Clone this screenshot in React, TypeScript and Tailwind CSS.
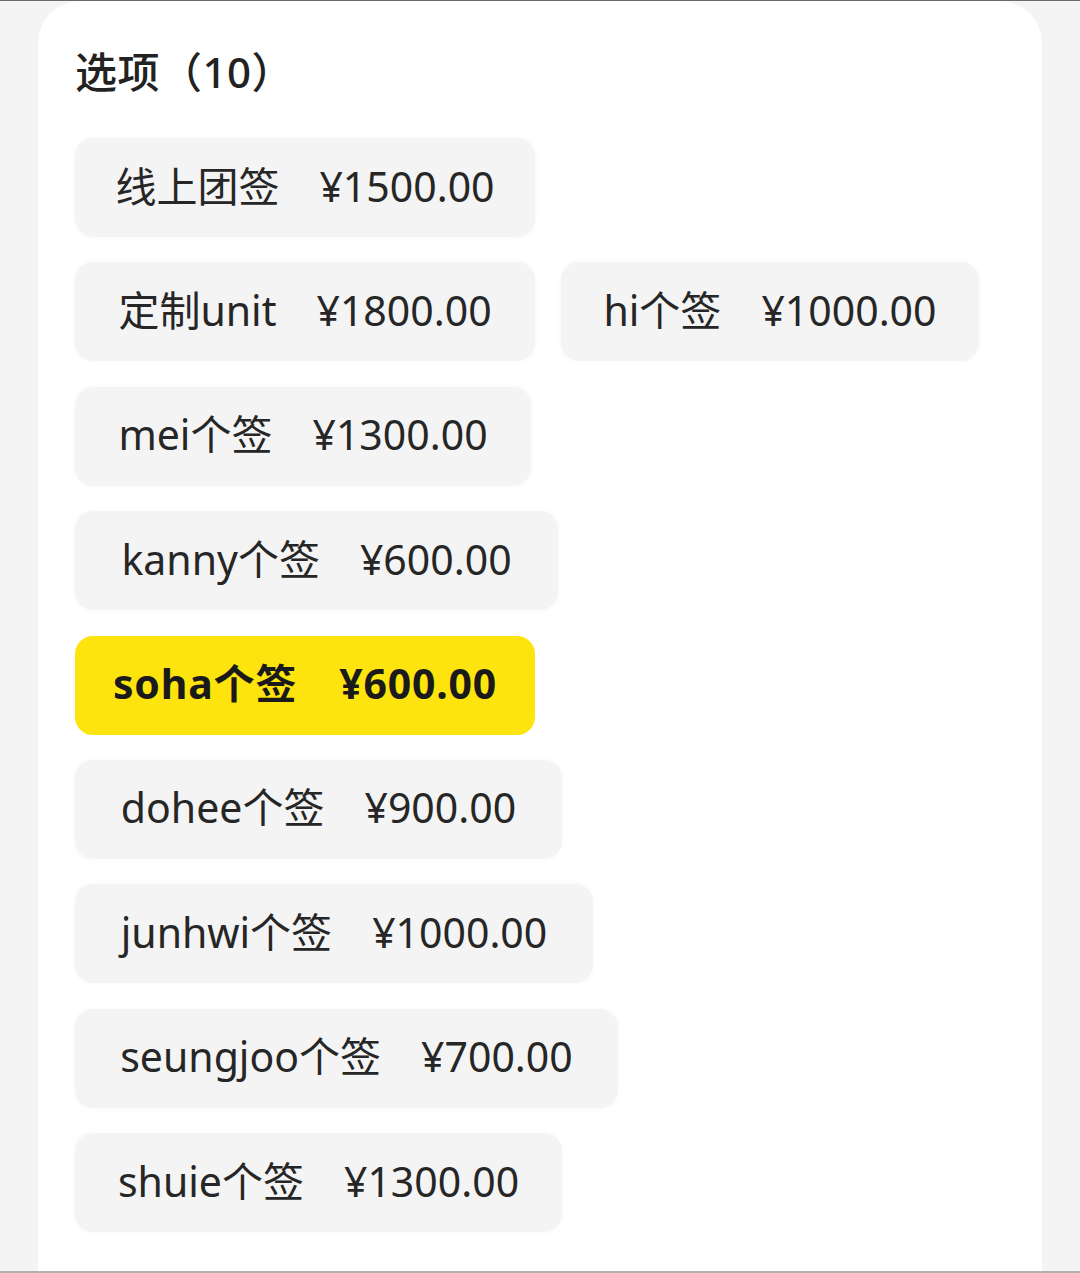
import React from "react";

type Opt = { name: string; price: string; w: string; selected?: boolean };

const rows: Opt[][] = [
  [{ name: "线上团签", price: "¥1500.00", w: "w-[460px]" }],
  [
    { name: "定制unit", price: "¥1800.00", w: "w-[460px]" },
    { name: "hi个签", price: "¥1000.00", w: "w-[418px]" },
  ],
  [{ name: "mei个签", price: "¥1300.00", w: "w-[456px]" }],
  [{ name: "kanny个签", price: "¥600.00", w: "w-[483px]" }],
  [{ name: "soha个签", price: "¥600.00", w: "w-[460px]", selected: true }],
  [{ name: "dohee个签", price: "¥900.00", w: "w-[487px]" }],
  [{ name: "junhwi个签", price: "¥1000.00", w: "w-[518px]" }],
  [{ name: "seungjoo个签", price: "¥700.00", w: "w-[543px]" }],
  [{ name: "shuie个签", price: "¥1300.00", w: "w-[487px]" }],
];

function Chip({ opt }: { opt: Opt }) {
  return (
    <div
      className={`${opt.w} h-[99px] rounded-[18px] flex items-center justify-center pb-[3px] text-[41px] leading-none ${
        opt.selected
          ? "bg-[#fde40f] font-bold text-[#1a1a1a] gap-[42px] tracking-[0.8px]"
          : "bg-[#f4f4f4] font-normal text-[#262626] gap-[40px] shadow-[0_0_6px_rgba(0,0,0,0.03)]"
      }`}
    >
      <span>{opt.name}</span>
      <span>{opt.price}</span>
    </div>
  );
}

export default function App() {
  return (
    <div
      className="w-[1080px] h-[1273px] bg-[#f4f4f4] border-t border-b-2 border-t-[#6b6b6b] border-b-[#b0b0b0] overflow-hidden flex flex-col"
      style={{ fontFamily: '"Noto Sans", "Noto Sans CJK SC", sans-serif' }}
    >
      <div className="mx-[38px] flex-1 bg-white rounded-t-[42px] pl-[37px]">
        <h2 className="mt-[40px] h-[60px] flex items-center text-[42px] font-medium text-[#222] tracking-[0.5px]">
          选项（10）
        </h2>
        <div className="mt-[37px] flex flex-col gap-[25.4px]">
          {rows.map((row, i) => (
            <div key={i} className="flex gap-[26px]">
              {row.map((opt) => (
                <Chip key={opt.name} opt={opt} />
              ))}
            </div>
          ))}
        </div>
      </div>
    </div>
  );
}
